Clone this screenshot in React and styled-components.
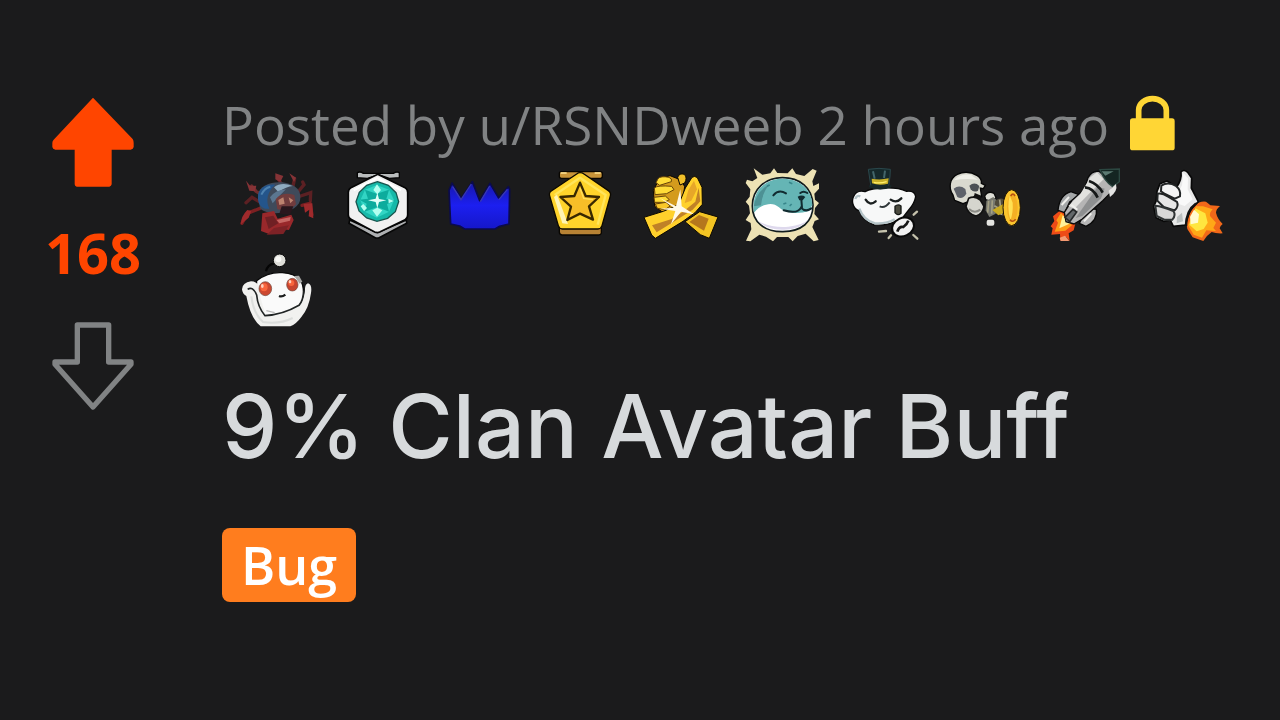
import React from 'react';
import styled, { createGlobalStyle } from 'styled-components';

const GlobalStyle = createGlobalStyle`
  * {
    box-sizing: border-box;
  }
  body {
    margin: 0;
    background: #1b1b1c;
    font-family: 'Open Sans', 'Noto Sans', sans-serif;
  }
`;

export default function App() {
  return (
    <>
      <GlobalStyle />
      <Post>
        <Votes>
          <VoteButton type="button" aria-label="upvote">
            <UpArrow />
          </VoteButton>
          <Score>168</Score>
          <VoteButton type="button" aria-label="downvote">
            <DownArrow />
          </VoteButton>
        </Votes>
        <Content>
          <Meta>
            <span>Posted by u/RSNDweeb 2 hours ago</span>
            <Lock />
          </Meta>
          <Awards>
            {awards.map(({ name, box, art }) => (
              <Award key={name} viewBox={box} role="img" aria-label={name}>
                {art}
              </Award>
            ))}
          </Awards>
          <Title>9% Clan Avatar Buff</Title>
          <Flair>Bug</Flair>
        </Content>
      </Post>
    </>
  );
}

const Post = styled.article`
  display: flex;
  min-height: 100vh;
  background: #1b1b1c;
`;

const Votes = styled.div`
  flex: none;
  display: flex;
  flex-direction: column;
  align-items: center;
  gap: 32px;
  width: 186px;
  padding-top: 97px;
`;

const VoteButton = styled.button`
  display: block;
  padding: 0;
  border: 0;
  background: none;
  cursor: pointer;
  svg {
    display: block;
    width: 82px;
    height: 90px;
  }
`;

const Score = styled.div`
  padding-bottom: 4px;
  color: #ff4500;
  font-size: 56px;
  font-weight: 700;
  line-height: 66px;
`;

const Content = styled.div`
  flex: 1;
  min-width: 0;
  padding: 86px 24px 40px 36px;
`;

const Meta = styled.div`
  display: flex;
  align-items: center;
  gap: 20px;
  color: #818384;
  font-size: 53px;
  line-height: 78px;
  white-space: nowrap;
  svg {
    flex: none;
    width: 46px;
    height: 56px;
  }
`;

const Awards = styled.div`
  display: flex;
  flex-wrap: wrap;
  gap: 10px 25px;
  margin-top: 2px;
  padding-left: 17px;
`;

const Award = styled.svg`
  width: 76px;
  height: 76px;
`;

const Title = styled.h1`
  margin: 42px 0 46px;
  color: #d7dadc;
  font-family: Inter, 'Open Sans', sans-serif;
  font-size: 88px;
  font-weight: 500;
  line-height: 112px;
`;

const Flair = styled.a.attrs({ href: '#bug' })`
  display: inline-block;
  padding: 0 19px;
  border-radius: 8px;
  background: #ff7d1e;
  color: #fff;
  font-size: 52px;
  font-weight: 600;
  line-height: 74px;
  text-decoration: none;
`;

const UpArrow = () => (
  <svg viewBox="66 52 246 270">
    <path
      fill="#ff4500"
      d="M189 54 L308 178 Q311 182 311 190 V202 Q310 209 302 210 H245 V314 Q244 320 238 321 H140 Q134 320 134 314 V210 H76 Q68 209 67 202 V190 Q67 184 71 180 Z"
    />
  </svg>
);

const DownArrow = () => (
  <svg viewBox="66 724 246 270">
    <path
      fill="none"
      stroke="#818384"
      strokeWidth="16"
      strokeLinejoin="round"
      d="M142 736 H236 V847 H303 V854 L189 982 L75 854 V847 H142 Z"
    />
  </svg>
);

const Lock = () => (
  <svg viewBox="1290 48 138 168" overflow="visible" role="img" aria-label="locked">
    <rect x="1293" y="112" width="134" height="96" rx="8" fill="#ffd635" />
    <path d="M1319 117 V87 A41.500 34 0 0 1 1402 87 V117" fill="none" stroke="#ffd635" strokeWidth="17" />
  </svg>
);

const awards = [
  {
    name: 'Crab',
    box: '27 18 228 228',
    art: (
      <g>
        <g fill="none" stroke="#5c2023" strokeWidth="10" strokeLinecap="round">
          <path d="M92 128 L66 112 L48 128" />
          <path d="M90 145 L52 160 L36 190" stroke="#7c2022" />
          <path d="M97 105 L78 94 L65 78" stroke="#6f2c2d" />
          <path d="M160 82 L146 58" stroke="#5b262a" />
          <path d="M188 82 L194 56" />
          <path d="M204 96 L222 74 L218 66" />
          <path d="M212 108 L242 98 L241 122" />
          <path d="M216 136 L240 130 L246 164" stroke="#7c2022" />
        </g>
        <path d="M84 104 C88 76 128 62 165 68 C198 74 216 92 210 122 C200 160 116 172 90 145 Z" fill="#3f4a5a" />
        <path d="M84 110 C84 84 110 70 136 74 C112 94 106 122 118 146 C96 150 82 132 84 110Z" fill="#24558b" />
        <path d="M132 82 Q154 65 188 78 Q170 79 145 96Z" fill="#8eabc0" />
        <path d="M120 112 Q136 90 168 88 L150 106 L128 130Z" fill="#5b7690" />
        <path d="M94 104 Q103 84 121 80" fill="none" stroke="#4d82b0" strokeWidth="6" />
        <path d="M137 118 Q157 94 193 105 L198 133 Q180 155 142 148 Z" fill="#713c3d" />
        <path d="M145 120 L160 112 L164 131 L148 135Z M176 112 L190 121 L181 130Z" fill="#bd8470" />
        <path d="M155 139 L190 139 L181 164 L148 161Z" fill="#29171d" />
        <path d="M97 160 L132 153 L143 176 L184 164 L191 180 L177 210 L136 205 L119 223 L93 213 Z" fill="#99282b" />
        <path d="M105 172 L130 167 L145 190 L116 207Z" fill="#702024" />
        <path d="M132 204 L177 196 L160 222 L110 224Z" fill="#7d2226" />
        <path d="M140 180 L182 171 L180 182 L148 190Z" fill="#c56663" />
        <path d="M48 62 L61 78 L79 77 L75 94 L58 92Z M136 40 L160 48 L151 66 L136 58Z M178 40 L198 53 L192 66Z" fill="#863336" />
        <path d="M52 150 L64 153 L56 173 L33 193 Q32 170 52 150Z M221 132 L247 130 L250 175 L236 169 L238 149 L225 158Z" fill="#a02a2c" />
      </g>
    ),
  },
  {
    name: 'Platinum',
    box: '330 18 228 228',
    art: (
      <g>
        <path d="M382 38 Q390 33 400 40 H490 Q501 33 508 38 V53 L478 55 L446 44 L412 55 L382 53Z" fill="#b9bcbd" stroke="#050505" strokeWidth="4" />
        <path d="M359 180 L442 218 L529 180 L530 190 L446 234 L437 234 L357 190Z" fill="#aeb0b2" stroke="#070707" strokeWidth="5" />
        <path d="M443 43 L525 83 Q533 88 533 97 V165 Q533 175 525 179 L449 216 Q442 219 434 216 L363 178 Q355 174 355 165 V97 Q355 88 363 83 Z" fill="#f1f1f1" stroke="#050505" strokeWidth="5" />
        <path d="M371 91 L442 54 L513 91" fill="none" stroke="#fff" strokeWidth="7" />
        <path d="M442 65 L475 76 L498 98 L506 125 L496 155 L473 175 L441 184 L410 174 L387 153 L378 125 L388 97 L410 76Z" fill="#16b9a9" stroke="#18564f" strokeWidth="4" />
        <path d="M405 89 L440 75 L477 89 L492 120 L477 155 L440 173 L404 155 L391 121Z" fill="#32d5c4" />
        <path d="M388 119 L414 116 L405 89 L440 101 L477 89 L469 117 L498 122 L471 132 L477 155 L442 141 L404 155 L410 131Z" fill="#0dac9d" />
        <path d="M441 73 L453 90 L442 103 L430 90Z M442 143 L457 151 L441 170 L427 151Z M400 132 L411 144 L402 153 L392 139Z M475 116 L492 123 L476 130Z" fill="#b4fff0" />
        <path d="M442 98 L447 117 L469 121 L447 126 L442 145 L437 126 L414 121 L437 116Z" fill="#e2fff8" />
      </g>
    ),
  },
  {
    name: 'Party Hat',
    box: '33 18 228 228',
    art: (
      <g>
        <defs>
          <linearGradient id="hat" x1="0" y1="0" x2="0" y2="1">
            <stop offset="0" stopColor="#1717a8" />
            <stop offset="0.500" stopColor="#1c1ff0" />
            <stop offset="1" stopColor="#1517c9" />
          </linearGradient>
        </defs>
        <path
          d="M66 69 L94 115 L127 65 L149 122 L180 70 L206 114 L235 80 L239 88 L237 192 L209 199 L195 207 H104 L89 198 L62 192 L57 91 Z"
          fill="url(#hat)"
          stroke="#0b0b4c"
          strokeWidth="5"
          strokeLinejoin="round"
        />
        <path d="M68 80 L93 119 L124 72 M151 125 L179 78 M207 119 L232 88" stroke="#3738b4" strokeWidth="4" fill="none" />
      </g>
    ),
  },
  {
    name: 'Gold',
    box: '336 18 228 228',
    art: (
      <g>
        <rect x="388" y="35" width="129" height="20" rx="6" fill="#c89438" stroke="#090600" strokeWidth="4" />
        <path d="M392 39 H410 M494 39 H512" stroke="#ffe391" strokeWidth="5" />
        <path d="M388 202 H514 V220 Q512 225 506 225 H396 Q388 224 388 216Z" fill="#b78234" stroke="#090600" strokeWidth="4" />
        <path d="M450 38 Q457 38 462 42 L535 92 Q544 98 541 108 L516 197 Q513 207 504 207 H397 Q388 207 385 197 L359 108 Q356 98 364 93 L440 42 Q445 38 450 38Z" fill="#ffd42b" stroke="#0d0900" strokeWidth="4" />
        <path d="M374 105 L450 53 L527 105 L503 194" fill="none" stroke="#ffe55a" strokeWidth="7" strokeLinejoin="round" />
        <path d="M372 111 L397 190 L414 192 L381 104Z" fill="#fff4b5" />
        <path d="M450 68 L467 108 L507 111 L477 139 L489 179 L450 161 L412 180 L423 140 L391 111 L433 108 Z" fill="#f7be28" stroke="#382800" strokeWidth="7" strokeLinejoin="round" />
        <path d="M450 84 L461 115 L489 119" fill="none" stroke="#ffe05a" strokeWidth="4" />
      </g>
    ),
  },
  {
    name: 'Helping Hand',
    box: '39 18 228 228',
    art: (
      <g stroke="#0c0800" strokeWidth="3" strokeLinejoin="round">
        <path d="M165 185 L209 155 L264 171 L238 235 L211 224Z" fill="#f3c423" />
        <path d="M178 186 L207 165 L236 176 L222 212Z" fill="#b5771d" stroke="none" />
        <path d="M70 92 L88 56 L120 47 L153 60 L164 80 L158 120 L174 164 L112 167 L74 139Z" fill="#d49b1d" />
        <path d="M84 56 Q92 47 117 52 Q128 56 124 65 L89 76 L78 68Z M73 84 Q82 75 125 79 L132 89 L110 101 L75 104Z M72 112 L106 108 L118 119 L103 127 L74 127Z" fill="#ffdc38" stroke="#684509" />
        <path d="M76 132 L108 127 L121 138 L104 149 L82 145Z" fill="#f9c729" stroke="#684509" />
        <path d="M143 52 Q148 38 163 43 Q173 53 164 69 L150 75Z" fill="#f2c12a" />
        <path d="M166 84 L186 52 Q194 46 202 53 L216 82 L217 133 L195 158 L159 184 L76 235 L65 225 L42 172 L100 154 L146 134 Z" fill="#ffd02b" />
        <path d="M66 196 L125 177 L162 153 L196 125 L206 83 L211 124 L188 149 L131 185 L80 217Z" fill="#c08127" stroke="none" />
        <path d="M175 91 L192 62 L201 88 L184 122 L164 129Z" fill="#e7a629" stroke="none" />
        <path d="M88 113 L138 139 L151 88 L155 139 L192 163 L153 155 L123 193 L136 153 L91 146 L132 143Z" fill="#fff9e8" stroke="none" />
      </g>
    ),
  },
  {
    name: 'Wholesome',
    box: '342 18 228 228',
    art: (
      <g>
        <path
          d="M371 25 L397 44 L421 40 L432 25 L442 39 L473 40 L487 25 L498 42 L523 48 L548 27 L560 32 L547 64 L550 78 L567 70 V86 L553 101 L555 119 L567 129 L555 144 L553 162 L567 178 L554 183 L547 201 L566 240 L551 244 L527 221 L503 228 L488 244 L475 231 L441 231 L429 244 L408 230 L388 224 L361 244 L348 242 L364 208 L362 189 L347 180 L360 160 L357 137 L347 125 L359 110 L361 88 L347 69 L351 59 L367 64 L382 54 Z"
          fill="#ede2b4"
        />
        <path d="M457 53 C509 53 548 83 549 136 C549 187 514 214 459 215 C403 216 367 186 367 138 C367 86 407 53 457 53Z" fill="#fff" stroke="#111c1d" strokeWidth="5" />
        <path d="M457 56 C508 56 546 87 547 135 L537 153 Q511 161 486 158 Q461 157 447 142 Q430 127 408 134 Q387 138 372 158 C362 95 404 56 457 56Z" fill="#65b5b5" />
        <path d="M371 139 Q380 92 419 73 Q396 99 393 136Z" fill="#4d9194" />
        <path d="M384 183 Q410 208 456 209 Q511 211 536 177 Q520 195 475 200 Q424 204 384 183Z" fill="#ded9ed" />
        <path d="M430 106 Q446 87 468 100 M511 99 Q520 91 532 99 M461 151 Q503 163 513 143 Q526 158 544 145 M514 119 L516 143" fill="none" stroke="#112b30" strokeWidth="6" strokeLinecap="round" />
        <path d="M503 110 Q516 103 526 111 L518 121 H508Z" fill="#112b30" />
        <path d="M477 67 L487 71 M411 79 L419 75 M460 132 L469 129 M479 138 L485 132" stroke="#38868b" strokeWidth="5" />
      </g>
    ),
  },
  {
    name: 'Bravo Grande',
    box: '45 18 228 228',
    art: (
      <g>
        <path d="M105 95 Q80 88 70 111 C62 130 74 149 88 152 Q98 184 133 195 Q180 199 218 173 L236 150 Q253 132 257 110 Q254 91 230 94 Q205 82 160 84 Q125 84 105 95Z" fill="#f7f8f8" stroke="#080808" strokeWidth="4" />
        <path d="M76 117 Q80 104 91 109 M88 146 Q101 182 135 190 Q171 192 194 178" fill="none" stroke="#b4c3c7" strokeWidth="7" />
        <path d="M107 119 Q119 139 137 124 M182 119 Q199 131 214 115" fill="none" stroke="#1b2020" strokeWidth="7" strokeLinecap="round" />
        <path d="M149 139 Q164 146 179 127" fill="none" stroke="#30383a" strokeWidth="6" />
        <path d="M195 139 Q204 131 213 138 V160 Q203 169 195 158Z" fill="#4a4a3e" stroke="#161916" strokeWidth="4" />
        <path d="M115 28 Q146 22 181 28 L180 48 L176 81 Q150 92 123 81 Z" fill="#15292b" stroke="#2b484c" strokeWidth="3" />
        <path d="M129 34 L134 56 M165 32 L162 54" stroke="#43666a" strokeWidth="6" />
        <path d="M125 56 Q150 61 176 55 L174 71 Q148 78 126 70Z" fill="#c9b127" />
        <path d="M131 67 Q149 71 170 65" stroke="#fff16d" strokeWidth="4" fill="none" />
        <path d="M117 75 Q149 88 184 75 V82 Q151 95 117 82Z" fill="#172627" />
        <ellipse cx="219" cy="201" rx="34" ry="27" transform="rotate(-25 219 201)" fill="#f1f1f1" stroke="#090909" strokeWidth="6" />
        <path d="M202 215 Q207 198 220 201 Q231 194 235 182" fill="none" stroke="#151515" strokeWidth="8" />
        <g stroke="#c6c3ad" strokeWidth="7" strokeLinecap="round">
          <path d="M147 215 L168 213" />
          <path d="M176 234 L183 226" />
          <path d="M251 164 L261 155" />
          <path d="M250 225 L262 236" />
        </g>
      </g>
    ),
  },
  {
    name: 'Doot',
    box: '348 18 228 228',
    art: (
      <g>
        <path d="M369 105 C354 83 359 54 382 43 Q412 29 442 47 Q456 56 454 70 L466 76 L460 86 L451 84 L455 110 L434 108 L421 123 L399 131 L374 121Z" fill="#d9d9cf" stroke="#060606" strokeWidth="4" />
        <path d="M372 61 Q388 41 422 44 L444 60 Q412 53 372 61Z" fill="#f0f0e8" />
        <path d="M371 86 Q388 73 406 87 L409 101 Q397 120 382 111Z" fill="#5e626a" />
        <path d="M418 77 Q434 64 448 78 L444 92 Q431 99 422 88Z" fill="#4c5055" />
        <path d="M434 99 L454 107 L451 118 H431Z" fill="#111" />
        <path d="M416 115 Q434 106 451 120 L462 139 Q459 162 438 168 Q413 161 408 139Z" fill="#d5d5ce" stroke="#111" strokeWidth="5" />
        <path d="M417 147 Q433 162 451 149" fill="none" stroke="#8c8c86" strokeWidth="6" />
        <path d="M464 108 Q474 91 492 100 L498 113 L484 125 L467 119Z" fill="#deded6" stroke="#0a0a0a" strokeWidth="4" />
        <path d="M469 122 L490 111 L501 122 L497 161 L478 171 L467 151Z" fill="#77786f" />
        <path d="M496 122 Q508 112 521 117 L529 168 Q508 169 492 151Z" fill="#514b3a" />
        <path d="M509 119 L514 165 M493 137 L526 157 M476 123 L473 158 M487 121 L485 161" stroke="#a4a084" strokeWidth="5" />
        <path d="M487 150 L520 132 L522 158 L505 166Z" fill="#caaa20" />
        <rect x="470" y="179" width="23" height="18" rx="6" fill="#e4e4e0" />
        <ellipse cx="545" cy="143" rx="26" ry="54" fill="#fbc52e" stroke="#1a1103" strokeWidth="3" />
        <ellipse cx="547" cy="143" rx="16" ry="42" fill="#f4b024" />
        <path d="M539 106 Q530 142 541 180 Q550 160 548 128Z" fill="#ffe052" />
        <path d="M542 108 Q549 97 555 108 M540 179 Q548 189 557 178" stroke="#b65012" strokeWidth="5" fill="none" />
      </g>
    ),
  },
  {
    name: 'Rocket Like',
    box: '51 18 228 228',
    art: (
      <g>
        <path d="M91 151 L69 169 L73 183 L62 199 L68 205 L64 224 L90 222 L91 242 L108 231 L119 243 L116 220 L131 211 L137 187Z" fill="#ee4b17" />
        <path d="M93 158 L79 181 L84 188 L74 215 L106 212 L126 196Z" fill="#ff9d17" />
        <path d="M98 166 L88 205 L122 190Z" fill="#fff199" />
        <path d="M89 233 L105 227 L118 243 H92Z" fill="#f49a72" />
        <path d="M84 151 Q89 104 123 95 L149 105 L119 126 L104 158Z" fill="#a4a7a8" stroke="#090909" strokeWidth="4" />
        <path d="M148 190 L170 145 L199 148 Q204 181 168 199Z" fill="#b7b7b7" stroke="#090909" strokeWidth="4" />
        <path d="M174 53 Q186 31 207 34 L237 60 L250 79 L239 101 L218 122 L157 177 L132 192 L108 185 L103 157 L126 121 L163 88Z" fill="#b5b5b5" stroke="#090909" strokeWidth="4" />
        <path d="M181 52 L201 37 L221 58 L186 92 L133 146 L115 138 L151 102Z" fill="#e2e2df" />
        <path d="M203 80 L224 86 L213 115 L157 168 L137 174Z" fill="#8d8f90" />
        <path d="M165 82 Q190 84 203 113 M177 63 Q204 72 218 98" fill="none" stroke="#151818" strokeWidth="8" />
        <path d="M210 29 L268 27 L268 65 L248 80 Q224 65 210 29Z" fill="#142522" stroke="#2c4741" strokeWidth="4" />
        <path d="M215 34 L251 34 L226 47Z" fill="#5b7a72" />
        <path d="M236 92 L258 72 Q264 94 240 111Z" fill="#e5e5e3" />
        <path d="M105 172 L129 148 L140 156 L119 185Z" fill="#62676a" stroke="#242729" strokeWidth="5" />
        <path d="M124 134 L142 149 M95 135 L117 111 M162 184 L184 160" stroke="#f0f0ed" strokeWidth="6" />
      </g>
    ),
  },
  {
    name: 'Rocket Thumb',
    box: '354 18 228 228',
    art: (
      <g>
        <path
          d="M493 137 Q510 122 528 125 Q537 131 541 136 L570 138 Q558 148 558 158 Q562 176 578 192 Q570 198 569 205 L578 220 Q558 221 545 216 Q530 226 520 243 Q505 238 488 232 L472 207 L468 181Z"
          fill="#f26819"
        />
        <path d="M498 139 L519 139 L548 148 Q538 158 540 168 L558 188 L550 204 L558 213 L529 211 L516 233 L491 224 L474 196Z" fill="#ffa817" />
        <path d="M496 145 L526 160 L533 188 L521 207 L500 214 L478 194Z" fill="#ffe63f" />
        <path d="M492 149 L507 163 L504 188 L482 193 L480 170Z" fill="#fffbd0" />
        <path d="M440 81 Q456 58 453 36 Q462 26 474 38 L485 54 L484 84 L505 125 L480 151 L466 195 L430 199 L421 180 L401 184 L378 173 L371 139 L378 124 L381 94 L390 71 L411 63Z" fill="#e8e8e8" stroke="#080808" strokeWidth="5" strokeLinejoin="round" />
        <path d="M460 39 L474 55 L473 88 L488 118 L464 138 L440 130 L446 95 L456 76Z" fill="#f9f9f9" />
        <path d="M394 77 Q414 64 438 78 Q454 91 450 109 L434 116 L405 102 L393 94Z" fill="#f4f4f4" stroke="#212425" strokeWidth="6" />
        <path d="M383 101 Q397 98 413 109 L441 126 Q447 139 434 151 L401 141 L382 122Z" fill="#e6e6e6" stroke="#212425" strokeWidth="6" />
        <path d="M376 137 Q397 139 430 153 Q439 165 427 179 L403 179 L380 168Z" fill="#d8d8d8" stroke="#303435" strokeWidth="6" />
        <path d="M498 130 Q468 151 468 198" fill="none" stroke="#111" strokeWidth="7" />
        <path d="M441 171 L456 158 L459 184 L440 190Z" fill="#bbc0c0" />
      </g>
    ),
  },
  {
    name: 'Take My Energy',
    box: '27 276 228 228',
    art: (
      <g>
        <path d="M108 334 Q112 314 133 310 L164 312" fill="none" stroke="#050505" strokeWidth="7" />
        <circle cx="149" cy="301" r="19" fill="#deded9" stroke="#080808" strokeWidth="3" />
        <circle cx="145" cy="298" r="9" fill="#f9f9f6" />
        <path d="M80 362 Q115 335 157 338 Q195 340 213 363 Q224 384 219 419 L210 452 L146 474 L102 469 L77 414Z" fill="#fafafa" stroke="#090909" strokeWidth="4" />
        <path d="M36 388 Q37 368 63 364 Q83 364 92 386 L91 412 L101 446 L108 468 Q158 467 206 440 Q219 426 225 391 Q224 373 234 370 Q247 373 243 399 Q237 444 214 471 Q198 493 181 499 H92 Q61 474 49 408 Q37 402 36 388Z" fill="#f1f1ef" />
        <path d="M53 388 Q68 377 80 405 Q83 441 105 467 Q157 465 207 436 Q219 423 222 391" fill="none" stroke="#202424" strokeWidth="5" />
        <path d="M64 409 Q70 460 99 486 Q148 494 188 474" fill="none" stroke="#dcdedc" strokeWidth="6" />
        <path d="M193 348 L207 347 L217 365 L209 371Z" fill="#a7a7a5" />
        <ellipse cx="106" cy="386" rx="19" ry="21" fill="#cc4830" stroke="#70483e" strokeWidth="2" />
        <ellipse cx="102" cy="382" rx="11" ry="12" fill="#f8653d" />
        <ellipse cx="97" cy="378" rx="4" ry="6" fill="#ffd0bd" />
        <ellipse cx="187" cy="374" rx="17" ry="19" fill="#c7442f" stroke="#70483e" strokeWidth="2" />
        <ellipse cx="184" cy="369" rx="9" ry="9" fill="#f8653d" />
        <ellipse cx="180" cy="365" rx="4" ry="5" fill="#ffd0bd" />
        <path d="M147 408 Q156 412 166 404" fill="none" stroke="#1b1d1d" strokeWidth="7" />
        <path d="M109 452 L134 458" stroke="#bbb" strokeWidth="4" />
      </g>
    ),
  },
];
